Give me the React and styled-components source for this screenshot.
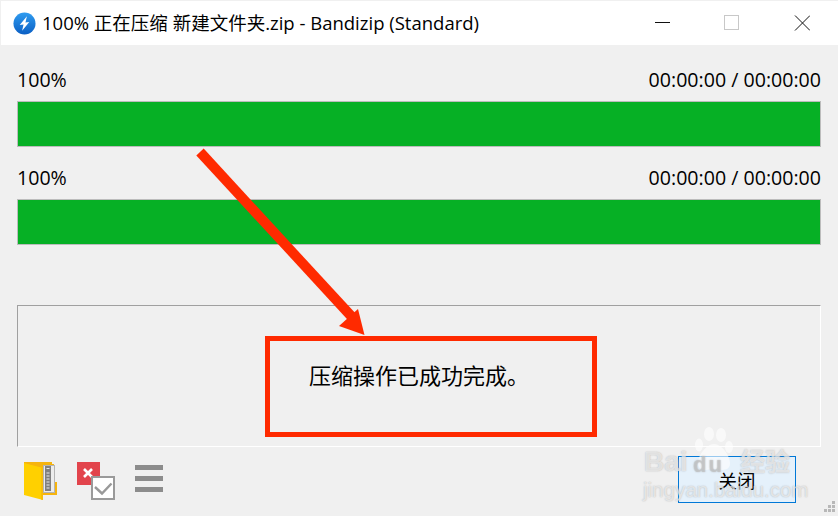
import styled, { createGlobalStyle } from 'styled-components';

const GlobalStyle = createGlobalStyle`
	html, body {
		margin: 0;
		padding: 0;
		background: #f0f0f0;
	}
	* {
		box-sizing: border-box;
	}
`;

const FONT = `'Open Sans', 'Noto Sans CJK SC', sans-serif`;
const RED = '#ff2a00';

const App = () => {
	return (
		<Window>
			<GlobalStyle />
			<TitleBar>
				<AppIcon viewBox='0 0 24 24'>
					<defs>
						<linearGradient id='iconBlue' x1='0' y1='0' x2='0' y2='1'>
							<stop offset='0' stopColor='#2f9cf0' />
							<stop offset='1' stopColor='#0b5fc4' />
						</linearGradient>
					</defs>
					<circle cx='12' cy='12' r='11.5' fill='url(#iconBlue)' />
					<path d='M14.5 4.5 L7 13.5 L11 13 L9.5 19.5 L17 10.5 L13 11 Z' fill='#fff' />
				</AppIcon>
				<TitleText>100% 正在压缩 新建文件夹.zip - Bandizip (Standard)</TitleText>
				<WindowButtons>
					<WindowButton>
						<svg width='16' height='16' viewBox='0 0 16 16'>
							<path d='M1 7.5 H16' stroke='#111' strokeWidth='1' />
						</svg>
					</WindowButton>
					<WindowButton>
						<svg width='16' height='16' viewBox='0 0 16 16'>
							<rect x='0.5' y='0.5' width='14' height='14' fill='none' stroke='#c8c8c8' strokeWidth='1' />
						</svg>
					</WindowButton>
					<WindowButton>
						<svg width='16' height='16' viewBox='0 0 16 16'>
							<path d='M1 0.5 L16 15.500 M16 0.5 L1 15.500' stroke='#111' strokeWidth='1' />
						</svg>
					</WindowButton>
				</WindowButtons>
			</TitleBar>

			<Content>
				<ProgressBlock>
					<ProgressLabels>
						<span>100%</span>
						<span>00:00:00 / 00:00:00</span>
					</ProgressLabels>
					<ProgressBar />
				</ProgressBlock>
				<ProgressBlock>
					<ProgressLabels>
						<span>100%</span>
						<span>00:00:00 / 00:00:00</span>
					</ProgressLabels>
					<ProgressBar />
				</ProgressBlock>

				<MessageBox>
					<MessageText>压缩操作已成功完成。</MessageText>
				</MessageBox>

				<Footer>
					<FooterIcons>
						<svg width='34' height='39' viewBox='0 0 34 39'>
							<path d='M0 0 H28 V2 H30 V20 H33 V33 H19 V31 H0 Z' fill='#f6b40e' />
							<rect x='19.500' y='3.500' width='11' height='27' fill='#ececec' stroke='#b4b4b4' />
							<rect x='21' y='4' width='6' height='25' fill='#808080' />
							<path d='M22.500 6.500 H25.500 M22.500 11 H25.500 M22.500 14 H25.500 M22.500 17 H25.500 M22.500 20 H25.500 M22.500 23 H25.500 M22.500 26 H25.500' stroke='#e8e8e8' strokeWidth='1' />
							<path d='M0 1 L19 6 V38 L0 33 Z' fill='#ffd000' />
							<path d='M19 6 V38 L17 37.5 V5.500 Z' fill='#f7bd0a' />
						</svg>
						<CheckIcon width='39' height='39' viewBox='0 0 39 39'>
							<rect x='0' y='0' width='23' height='23' fill='#e2444c' />
							<path d='M7 7 L15 15 M15 7 L7 15' stroke='#fff' strokeWidth='2.6' />
							<rect x='15' y='15' width='22' height='22' fill='#fff' stroke='#9a9a9a' strokeWidth='2' />
							<path d='M18 25 L25 31.500 L34.500 21.500' fill='none' stroke='#999' strokeWidth='2.4' />
						</CheckIcon>
						<MenuIcon>
							<span />
							<span />
							<span />
						</MenuIcon>
					</FooterIcons>
					<CloseButton>关闭</CloseButton>
				</Footer>
			</Content>

			{/* 빨간 표시 */}
			<Annotation width='838' height='516' viewBox='0 0 838 516'>
				<path d='M200 152 L352 317' stroke={RED} strokeWidth='10' fill='none' />
				<path d='M364.500 335 L358 309 L339 326 Z' fill={RED} />
			</Annotation>
			<HighlightBox />

			<Watermark>
				<PawIcon width='40' height='46' viewBox='0 0 40 46'>
					<ellipse cx='5' cy='18' rx='4' ry='6.500' />
					<ellipse cx='15' cy='7' rx='5' ry='7' />
					<ellipse cx='27' cy='8' rx='5' ry='7' />
					<ellipse cx='35' cy='20' rx='4' ry='6' />
					<path d='M20 17 C28 17 36 29 36 36 C36 45 27 43 20 42 C13 43 4 45 4 36 C4 29 12 17 20 17 Z' />
				</PawIcon>
				<WatermarkBrand>Bai</WatermarkBrand>
				<WatermarkDu>du</WatermarkDu>
				<WatermarkCn>经验</WatermarkCn>
				<WatermarkUrl>jingyan.baidu.com</WatermarkUrl>
			</Watermark>

			<Grip>
				{[0, 1, 2, 3, 4, 5].map((i) => (
					<i key={i} />
				))}
			</Grip>
		</Window>
	);
};

export default App;

const Window = styled.div`
	position: relative;
	display: flex;
	flex-direction: column;
	width: 838px;
	height: 516px;
	overflow: hidden;
	background: #f0f0f0;
	font-family: ${FONT};
	color: #000;
`;

const TitleBar = styled.div`
	display: flex;
	align-items: center;
	flex: 0 0 44px;
	margin-top: 1px;
	margin-left: 1px;
	padding-left: 12px;
	background: #fff;
`;

const AppIcon = styled.svg`
	width: 23px;
	height: 23px;
	margin-right: 6px;
`;

const TitleText = styled.span`
	font-size: 18.5px;
	white-space: nowrap;
	margin-bottom: 2px;
`;

const WindowButtons = styled.div`
	display: flex;
	gap: 54px;
	margin-left: auto;
	margin-right: 28px;
`;

const WindowButton = styled.div`
	display: flex;
	width: 16px;
	height: 16px;
`;

const Content = styled.div`
	display: flex;
	flex-direction: column;
	flex: 1;
	padding: 4px 17px 0;
`;

const ProgressBlock = styled.div`
	display: flex;
	flex-direction: column;
	flex: 0 0 98px;
	padding-top: 18px;
`;

const ProgressLabels = styled.div`
	display: flex;
	justify-content: space-between;
	flex: 0 0 34px;
	font-size: 19.6px;
	line-height: 26px;
`;

const ProgressBar = styled.div`
	flex: 0 0 46px;
	background: #06b025;
	border: 1px solid #bcbcbc;
`;

const MessageBox = styled.div`
	display: flex;
	align-items: center;
	flex: 0 0 142px;
	margin-top: 60px;
	padding: 0 0 0 291px;
	border-top: 1px solid #a0a0a0;
	border-left: 1px solid #a0a0a0;
	border-right: 1px solid #fff;
	border-bottom: 1px solid #fff;
`;

const MessageText = styled.span`
	font-size: 22px;
	margin-bottom: 4px;
`;

const Footer = styled.div`
	display: flex;
	justify-content: space-between;
	padding: 15px 25px 0 7px;
`;

const FooterIcons = styled.div`
	display: flex;
	align-items: flex-start;
`;

const CheckIcon = styled.svg`
	margin-left: 19px;
`;

const MenuIcon = styled.div`
	display: flex;
	flex-direction: column;
	gap: 6px;
	width: 28px;
	margin: 3px 0 0 19px;
	span {
		display: block;
		height: 5px;
		background: #8c8c8c;
	}
`;

const CloseButton = styled.div`
	display: flex;
	align-items: center;
	justify-content: center;
	width: 118px;
	height: 47px;
	margin-top: -6px;
	background: #e5f1fb;
	border: 1px solid #0078d7;
	font-size: 18.5px;
`;

const Annotation = styled.svg`
	position: absolute;
	top: 0;
	left: 0;
	pointer-events: none;
`;

const HighlightBox = styled.div`
	position: absolute;
	left: 265px;
	top: 336px;
	width: 332px;
	height: 101px;
	border: 5px solid ${RED};
`;

const Watermark = styled.div`
	position: absolute;
	left: 640px;
	top: 424px;
	width: 180px;
	height: 90px;
	color: rgba(255, 255, 255, 0.6);
	text-shadow: 0 0 1px rgba(140, 140, 140, 0.45), 0 0 2px rgba(140, 140, 140, 0.25);
	font-family: 'Liberation Sans', 'Noto Sans CJK SC', sans-serif;
`;

const PawIcon = styled.svg`
	position: absolute;
	left: 54px;
	top: 3px;
	fill: rgba(255, 255, 255, 0.6);
`;

const WatermarkBrand = styled.span`
	position: absolute;
	left: 4px;
	top: 22px;
	font-size: 28px;
	font-weight: 700;
`;

const WatermarkDu = styled.span`
	position: absolute;
	left: 53px;
	top: 28px;
	font-size: 22px;
	font-weight: 700;
	letter-spacing: 2px;
	color: rgba(205, 205, 205, 0.55);
`;

const WatermarkCn = styled.span`
	position: absolute;
	left: 100px;
	top: 18px;
	font-size: 25px;
	font-weight: 700;
`;

const WatermarkUrl = styled.span`
	position: absolute;
	left: 3px;
	top: 54px;
	font-size: 20.500px;
`;

const Grip = styled.div`
	position: absolute;
	right: 3px;
	bottom: 4px;
	display: grid;
	grid-template-columns: repeat(3, 3px);
	grid-template-rows: repeat(3, 3px);
	gap: 1px;
	i {
		display: block;
		background: #b8b8b8;
	}
	i:nth-child(1) {
		grid-column: 3;
		grid-row: 1;
	}
	i:nth-child(2) {
		grid-column: 2;
		grid-row: 2;
	}
	i:nth-child(3) {
		grid-column: 3;
		grid-row: 2;
	}
	i:nth-child(4) {
		grid-column: 1;
		grid-row: 3;
	}
	i:nth-child(5) {
		grid-column: 2;
		grid-row: 3;
	}
	i:nth-child(6) {
		grid-column: 3;
		grid-row: 3;
	}
`;
